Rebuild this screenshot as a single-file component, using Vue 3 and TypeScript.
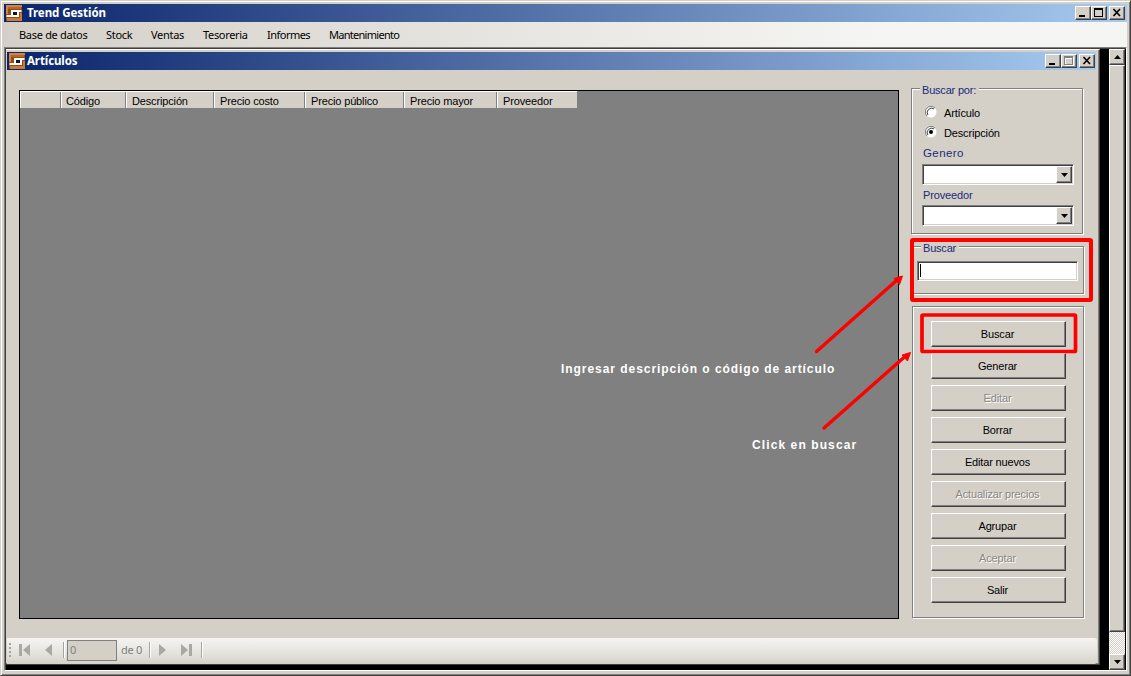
<script setup lang="ts">
import { ref } from 'vue'

interface Action {
  label: string
  disabled?: boolean
}

interface Column {
  label: string
  width: number
}

const menu: string[] = ['Base de datos', 'Stock', 'Ventas', 'Tesoreria', 'Informes', 'Mantenimiento']

const columns: Column[] = [
  { label: '', width: 41 },
  { label: 'Código', width: 65 },
  { label: 'Descripción', width: 88 },
  { label: 'Precio costo', width: 91 },
  { label: 'Precio público', width: 99 },
  { label: 'Precio mayor', width: 93 },
  { label: 'Proveedor', width: 80 },
]

const actions: Action[] = [
  { label: 'Buscar' },
  { label: 'Generar' },
  { label: 'Editar', disabled: true },
  { label: 'Borrar' },
  { label: 'Editar nuevos' },
  { label: 'Actualizar precios', disabled: true },
  { label: 'Agrupar' },
  { label: 'Aceptar', disabled: true },
  { label: 'Salir' },
]

const searchBy = ref<string>('Descripción')
const searchOptions: string[] = ['Artículo', 'Descripción']
const filters: string[] = ['Genero', 'Proveedor']
</script>

<template>
  <div class="window">
    <header class="title-bar main-title">
      <svg class="logo" viewBox="0 0 16 16">
        <rect width="16" height="16" rx="1" fill="#9a4a12" />
        <path d="M0 0h16v2H2v7H0z" fill="#cf8644" />
        <path d="M2 2h13v2H2z" fill="#b5682a" />
        <path d="M1 13h13V8h2v8H1z" fill="#c87c38" />
        <path d="M5 5h10.500v2H13v5H0.500v-2H5z" fill="#fff" />
        <path d="M7 7h4v3H7z" fill="#16161c" />
      </svg>
      <span class="title-text t-main">Trend Gestión</span>
      <div class="controls">
        <span class="ctl"><svg viewBox="0 0 12 10"><path d="M2 7h6v2H2z" /></svg></span>
        <span class="ctl"><svg viewBox="0 0 12 10"><path d="M1 0h9v9H1zM2 2v6h7V2z" fill-rule="evenodd" /></svg></span>
        <span class="ctl close"><svg viewBox="0 0 12 10"><path d="M2.500 1L9 8M9 1L2.500 8" fill="none" stroke="#000" stroke-width="1.600" /></svg></span>
      </div>
    </header>

    <nav class="menu">
      <span v-for="item in menu" :key="item" :class="'m-' + item.slice(0, 3).toLowerCase()">{{ item }}</span>
    </nav>

    <div class="mdi">
      <section class="child">
        <header class="title-bar child-title">
          <svg class="logo" viewBox="0 0 16 16">
            <rect width="16" height="16" rx="1" fill="#9a4a12" />
            <path d="M0 0h16v2H2v7H0z" fill="#cf8644" />
            <path d="M2 2h13v2H2z" fill="#b5682a" />
            <path d="M1 13h13V8h2v8H1z" fill="#c87c38" />
            <path d="M5 5h10.500v2H13v5H0.500v-2H5z" fill="#fff" />
            <path d="M7 7h4v3H7z" fill="#16161c" />
          </svg>
          <span class="title-text t-child">Artículos</span>
          <div class="controls">
            <span class="ctl"><svg viewBox="0 0 12 10"><path d="M2 7h6v2H2z" /></svg></span>
            <span class="ctl"><svg viewBox="0 0 12 10"><path d="M2 1h9v9H2zM3 3v6h7V3z" fill="#fff" fill-rule="evenodd" /><path d="M1 0h9v9H1zM2 2v6h7V2z" fill="#808080" fill-rule="evenodd" /></svg></span>
            <span class="ctl close"><svg viewBox="0 0 12 10"><path d="M2.500 1L9 8M9 1L2.500 8" fill="none" stroke="#000" stroke-width="1.600" /></svg></span>
          </div>
        </header>

        <div class="content">
          <div class="grid">
            <div class="grid-head">
              <span v-for="c in columns" :key="c.label" class="col" :style="{ width: c.width + 'px' }">{{ c.label }}</span>
            </div>
          </div>

          <aside class="side">
            <div class="group by">
              <span class="legend">Buscar por:</span>
              <label v-for="o in searchOptions" :key="o" class="radio" @click="searchBy = o">
                <svg viewBox="0 0 12 12">
                  <circle cx="6" cy="6" r="5.500" fill="#fff" />
                  <path d="M2 10A5.500 5.500 0 0 1 10 2" fill="none" stroke="#808080" />
                  <path d="M2.900 9A4.400 4.400 0 0 1 9 2.900" fill="none" stroke="#404040" />
                  <circle v-if="searchBy === o" cx="6" cy="6" r="2" />
                </svg>
                <span>{{ o }}</span>
              </label>
              <div v-for="f in filters" :key="f" class="filter">
                <span class="blue" :class="'f-' + f.toLowerCase()">{{ f }}</span>
                <div class="combo">
                  <span class="drop"><svg viewBox="0 0 7 4"><path d="M0 0h7L3.500 4z" /></svg></span>
                </div>
              </div>
            </div>

            <div class="group find">
              <span class="legend">Buscar</span>
              <div class="field"><i class="caret"></i></div>
            </div>

            <div class="group actions">
              <button v-for="a in actions" :key="a.label" :disabled="a.disabled">{{ a.label }}</button>
            </div>
          </aside>
        </div>

        <footer class="nav-bar">
          <span class="grip"><i></i><i></i><i></i><i></i></span>
          <svg class="first" viewBox="0 0 11 12"><path d="M0 0h3v12H0zM11 0v12L4 6z" /></svg>
          <svg class="prev" viewBox="0 0 7 12"><path d="M7 0v12L0 6z" /></svg>
          <i class="sep s1"></i>
          <span class="pos">0</span>
          <span class="total">de 0</span>
          <i class="sep s2"></i>
          <svg class="next" viewBox="0 0 7 12"><path d="M0 0v12l7-6z" /></svg>
          <svg class="last" viewBox="0 0 11 12"><path d="M0 0v12l7-6zM8 0h3v12H8z" /></svg>
          <i class="sep s3"></i>
        </footer>
      </section>

      <div class="scroll">
        <span class="sbtn up"><svg viewBox="0 0 7 4"><path d="M0 4h7L3.500 0z" /></svg></span>
        <span class="thumb"></span>
        <span class="track"></span>
        <span class="sbtn"><svg viewBox="0 0 7 4"><path d="M0 0h7L3.500 4z" /></svg></span>
      </div>
    </div>

    <svg class="marks" viewBox="0 0 1131 676">
      <g fill="none" stroke="#fe0000">
        <rect x="912" y="240" width="179" height="60" rx="1" stroke-width="4" />
        <rect x="922" y="315" width="153.500" height="36.500" rx="1" stroke-width="3.700" />
        <path d="M816.500 351.500L897 280" stroke-width="3.400" stroke-linecap="round" />
        <path d="M824 428L905 356.500" stroke-width="3.400" stroke-linecap="round" />
      </g>
      <path d="M902.500 276L894 278.500L899.500 284.500z" fill="#fe0000" stroke="#fe0000" />
      <path d="M910.500 352.500L902 355L907.500 361z" fill="#fe0000" stroke="#fe0000" />
    </svg>
    <span class="note n1">Ingresar descripción o código de artículo</span>
    <span class="note n2">Click en buscar</span>
  </div>
</template>

<style>
body {
  margin: 0;
  overflow: hidden;
}
</style>

<style scoped>
* {
  box-sizing: border-box;
}
.window {
  position: relative;
  width: 1131px;
  height: 676px;
  padding: 2px;
  background: #d4d0c8;
  border: 1px solid #d4d0c8;
  border-right-color: #404040;
  border-bottom-color: #404040;
  box-shadow: inset 1px 1px #fff, inset -1px -1px #808080;
  font: 11px/14px 'Liberation Sans', Arial, sans-serif;
  color: #000;
  display: flex;
  flex-direction: column;
}
.title-bar {
  display: flex;
  align-items: center;
  flex: none;
  height: 18px;
  background: linear-gradient(90deg, #0a246a, #a6caf0);
}
.main-title {
  margin: 1px 1px 0;
  padding: 0 2px;
}
.logo {
  width: 16px;
  height: 16px;
  flex: none;
}
.title-text {
  color: #fff;
  font: bold 11.5px/16px 'Noto Sans', Tahoma, sans-serif;
  white-space: nowrap;
}
.t-main {
  margin-left: 5px;
  letter-spacing: -0.05px;
}
.t-child {
  margin-left: 2px;
  letter-spacing: -0.1px;
}
.controls {
  margin-left: auto;
  display: flex;
}
.ctl {
  width: 16px;
  height: 14px;
  background: #d4d0c8;
  border: 1px solid;
  border-color: #fff #404040 #404040 #fff;
  box-shadow: inset -1px -1px #808080;
}
.ctl svg {
  display: block;
  width: 12px;
  height: 10px;
  margin: 1px 0 0 1px;
}
.ctl.close {
  margin-left: 2px;
}
.menu {
  flex: none;
  height: 25px;
  margin: 0 1px;
  padding-top: 5px;
  background: linear-gradient(90deg, #d4d0c8, #f5f5f3 78%);
  font: 11px/15px 'Noto Sans', Tahoma, sans-serif;
  display: grid;
  grid-template-columns: 87px 45px 52px 64px 62px 90px;
  padding-left: 15px;
  white-space: nowrap;
}
.m-bas { letter-spacing: -0.3px; }
.m-sto { letter-spacing: -0.3px; }
.m-ven { letter-spacing: -0.3px; }
.m-tes { letter-spacing: -0.32px; }
.m-inf { letter-spacing: -0.52px; }
.m-man { letter-spacing: -0.72px; }
.mdi {
  flex: 1;
  min-height: 0;
  display: flex;
  margin: 0 1px 2px 1px;
  padding-right: 1px;
  background: #000;
  border: 1px solid #808080;
  border-right-color: #fff;
  border-bottom-color: #fff;
  box-shadow: inset 1px 1px #404040;
}
.child {
  flex: none;
  width: 1094px;
  height: 616px;
  margin: 1px 0 0 1px;
  background: #d4d0c8;
  border-top: 1px solid #fff;
  border-right: 1px solid #404040;
  border-bottom: 1px solid #404040;
  box-shadow: inset -1px -1px #808080;
  padding: 2px 3px 1px 1px;
  display: flex;
  flex-direction: column;
}
.child-title {
  padding: 0 1px 0 2px;
}
.content {
  height: 568px;
  flex: none;
  display: flex;
  padding: 20px 0 0 12px;
}
.grid {
  width: 880px;
  height: 529px;
  background: #808080;
  border: 1px solid #000;
}
.grid-head {
  display: flex;
  width: 557px;
  height: 17px;
  background: #d4d0c8;
  border-top: 1px solid #fff;
}
.col {
  flex: none;
  border-left: 1px solid #fff;
  border-right: 1px solid #808080;
  line-height: 19px;
  height: 16px;
  padding-left: 5px;
  white-space: nowrap;
  letter-spacing: -0.15px;
}
.col:nth-child(2) {
  padding-left: 4px;
}
.col:last-child {
  border-right: 0;
}
.side {
  width: 174px;
  margin: -2px 0 0 12px;
  display: flex;
  flex-direction: column;
}
.group {
  border: 1px solid #808080;
  box-shadow: 1px 1px #fff, inset 1px 1px #fff;
}
.legend {
  display: block;
  width: max-content;
  height: 13px;
  line-height: 15px;
  padding: 0 3px 0 2px;
  margin: -6px 0 0 8px;
  background: #d4d0c8;
  color: #1b2a78;
  letter-spacing: -0.2px;
}
.by {
  width: 172px;
  height: 146px;
}
.radio {
  display: flex;
  align-items: center;
  height: 20px;
  padding-left: 13px;
  gap: 7px;
  letter-spacing: -0.15px;
}
.radio span {
  padding-top: 2px;
}
.legend + .radio {
  margin-top: 6px;
}
.radio + .filter {
  margin-top: 1px;
}
.radio svg {
  width: 12px;
  height: 12px;
}
.filter {
  height: 41px;
  padding-left: 10px;
}
.blue {
  display: block;
  height: 21px;
  line-height: 22px;
  padding-left: 1px;
  color: #1b2a78;
}
.f-genero {
  font-size: 11.5px;
  line-height: 21px;
  letter-spacing: 0.4px;
}
.f-proveedor {
  line-height: 23px;
  letter-spacing: -0.15px;
}
.combo {
  width: 152px;
  height: 21px;
  background: #fff;
  border: 1px solid;
  border-color: #808080 #fff #fff #808080;
  box-shadow: inset 1px 1px #404040, inset -1px -1px #d4d0c8;
  padding: 1px;
  display: flex;
  justify-content: flex-end;
}
.drop {
  width: 16px;
  height: 17px;
  background: #d4d0c8;
  border: 1px solid;
  border-color: #fff #404040 #404040 #fff;
  box-shadow: inset -1px -1px #808080;
  display: flex;
  align-items: center;
  justify-content: center;
}
.drop svg,
.sbtn svg {
  width: 7px;
  height: 4px;
}
.find {
  width: 172px;
  height: 48px;
  margin: 12px 0 0 1px;
}
.field {
  width: 161px;
  height: 20px;
  margin: 7px 0 0 4px;
  background: #fff;
  border: 1px solid;
  border-color: #808080 #fff #fff #808080;
  box-shadow: inset 1px 1px #404040, inset -1px -1px #d4d0c8;
  padding: 2px;
}
.caret {
  display: block;
  width: 1px;
  height: 13px;
  background: #000;
}
.actions {
  width: 172px;
  height: 312px;
  margin: 12px 0 0 1px;
  padding: 14px 0 0 18px;
  display: flex;
  flex-direction: column;
  gap: 6px;
}
button {
  width: 135px;
  height: 26px;
  flex: none;
  padding: 0 2px 1px 0;
  background: #d4d0c8;
  border: 1px solid;
  border-color: #fff #404040 #404040 #fff;
  box-shadow: inset -1px -1px #808080;
  font: 11px/14px 'Liberation Sans', Arial, sans-serif;
  letter-spacing: -0.16px;
  color: #000;
}
button:disabled {
  color: #8a8780;
  text-shadow: 1px 1px #fff;
}
.nav-bar {
  height: 26px;
  flex: none;
  margin-right: -1px;
  padding-bottom: 2px;
  background: linear-gradient(#f5f4f1, #e6e4de 55%, #d5d2ca);
  border-radius: 0 3px 3px 0;
  display: flex;
  align-items: center;
  padding-left: 2px;
  color: #808080;
  font: 11px/16px 'Noto Sans', Tahoma, sans-serif;
}
.nav-bar svg {
  height: 12px;
  fill: #aaa8a2;
}
.grip {
  display: grid;
  gap: 2px;
}
.grip i {
  width: 2px;
  height: 2px;
  background: #a5a29b;
}
.first { width: 11px; margin-left: 8px; }
.prev { width: 7px; margin-left: 15px; }
.sep {
  width: 2px;
  height: 16px;
  background: #a6a49e;
  border-right: 1px solid #fff;
}
.s1 { margin-left: 11px; }
.pos {
  width: 50px;
  height: 21px;
  margin-left: 2px;
  padding: 1px 2px;
  background: #d4d0c8;
  border: 1px solid #808080;
}
.total {
  margin-left: 4px;
  width: 25px;
  letter-spacing: -0.3px;
  white-space: nowrap;
}
.s2 { margin-left: 3px; }
.next { width: 7px; margin-left: 8px; }
.last { width: 11px; margin-left: 15px; }
.s3 { margin-left: 9px; }
.scroll {
  width: 16px;
  margin: 1px 0 0 auto;
  display: flex;
  flex-direction: column;
}
.sbtn,
.thumb {
  flex: none;
  height: 16px;
  background: #d4d0c8;
  border: 1px solid;
  border-color: #fff #404040 #404040 #fff;
  box-shadow: inset -1px -1px #808080;
  display: flex;
  align-items: center;
  justify-content: center;
}
.thumb {
  height: 567px;
}
.track {
  flex: 1;
  background: repeating-conic-gradient(#fff 0 25%, #d4d0c8 0 50%) 0 0 / 2px 2px;
}
.marks {
  position: absolute;
  left: -1px;
  top: -1px;
  width: 1131px;
  height: 676px;
  pointer-events: none;
}
.note {
  position: absolute;
  color: #fff;
  font: bold 12px/16px 'Liberation Sans', Arial, sans-serif;
  white-space: nowrap;
}
.n1 {
  left: 560px;
  top: 360px;
  letter-spacing: 0.95px;
}
.n2 {
  left: 751px;
  top: 436px;
  letter-spacing: 1.1px;
}
</style>
